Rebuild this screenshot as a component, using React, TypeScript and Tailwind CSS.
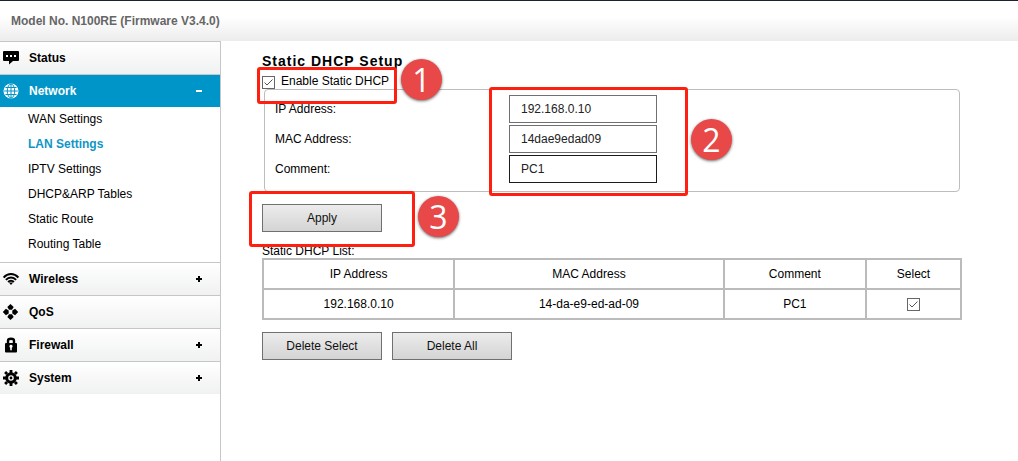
import { useState, type ReactNode } from "react";

// Router admin page: Network > LAN Settings, static DHCP section, with the
// numbered walkthrough callouts drawn over the steps.

const icons: Record<string, ReactNode> = {
  status: (
    <>
      <path d="M1 1h14a1 1 0 0 1 1 1v8a1 1 0 0 1-1 1h-5l-4 3.6V11H1a1 1 0 0 1-1-1V2a1 1 0 0 1 1-1z" />
      <path d="M3 5h2v2H3zM7 5h2v2H7zM11 5h2v2h-2z" fill="#fff" />
    </>
  ),
  network: (
    <>
      <circle cx="8" cy="8" r="7.5" />
      <g fill="none" stroke="#0095c8" strokeWidth="1">
        <path d="M8 1v14M1.2 8h13.6M2.4 4.5h11.2M2.4 11.5h11.2" />
        <ellipse cx="8" cy="8" rx="3.7" ry="7" />
      </g>
    </>
  ),
  wireless: (
    <>
      <g fill="none" stroke="currentColor" strokeWidth="2">
        <path d="M.6 6.6C4.8 1.8 11.2 1.8 15.4 6.600" />
        <path d="M2.900 8.900c2.900-3.100 7.300-3.100 10.200 0" />
        <path d="M5.100 11c1.600-1.700 4.200-1.700 5.800 0" />
      </g>
      <path d="M5.900 11.500h4.200L8 14z" />
    </>
  ),
  qos: (
    <path d="M7.500 0l3.200 3.100-1.700 2.600H6L4.300 3.100zM7.500 16l3.200-3.100-1.700-2.600H6l-1.700 2.600zM-.2 8l3.100-3.200L5.700 6.500v3L2.900 11.200zM15.200 8l-3.100-3.200-2.800 1.700v3l2.800 1.700z" />
  ),
  firewall: (
    <>
      <path d="M5 7V3.800C5 2.400 6 1.800 8 1.800s3 .6 3 2V7" fill="none" stroke="currentColor" strokeWidth="2.400" />
      <rect x="2" y="6" width="12" height="9.500" rx="1" />
      <path d="M8 7.800a1.600 1.600 0 0 1 .8 3v2.400H7.200v-2.400a1.600 1.600 0 0 1 .8-3z" fill="#fff" />
    </>
  ),
  system: (
    <>
      <g stroke="currentColor" strokeWidth="2.800">
        <path d="M8 0v3M8 13v3M0 8h3M13 8h3M2.100 2.100l2 2M11.900 11.900l2 2M13.900 2.100l-2 2M4.100 11.900l-2 2" />
      </g>
      <circle cx="8" cy="8" r="4.300" fill="none" stroke="currentColor" strokeWidth="3" />
      <circle cx="8" cy="8" r="1.400" />
    </>
  ),
};

const subPages = [
  "WAN Settings",
  "LAN Settings",
  "IPTV Settings",
  "DHCP&ARP Tables",
  "Static Route",
  "Routing Table",
];

interface NavItem {
  id: string;
  label: string;
  expandable?: boolean;
  pages?: string[];
}

const nav: NavItem[] = [
  { id: "status", label: "Status" },
  { id: "network", label: "Network", expandable: true, pages: subPages },
  { id: "wireless", label: "Wireless", expandable: true },
  { id: "qos", label: "QoS" },
  { id: "firewall", label: "Firewall", expandable: true },
  { id: "system", label: "System", expandable: true },
];

const fields = [
  { id: "ip", label: "IP Address:", value: "192.168.0.10", border: "border-[#707070]" },
  { id: "mac", label: "MAC Address:", value: "14dae9edad09", border: "border-[#707070]" },
  { id: "comment", label: "Comment:", value: "PC1", border: "border-[#1c1c1c]" },
];

const columns = [
  { label: "IP Address", width: "w-[27.4%]" },
  { label: "MAC Address", width: "w-[38.6%]" },
  { label: "Comment", width: "w-[20.4%]" },
  { label: "Select", width: "w-[13.6%]" },
];

function Sidebar() {
  return (
    <nav className="w-[221px] shrink-0 border-r border-[#c6c6c6]">
      <ul>
        {nav.map((item) => {
          const open = !!item.pages;
          return (
            <li key={item.id}>
              <button
                type="button"
                className={`flex h-[33px] w-full items-center gap-[10px] border-t border-[#c6c6c6] pr-[18px] pl-[3px] font-bold ${
                  open
                    ? "bg-[#0095c8] text-white"
                    : "bg-linear-to-b from-white to-[#f0f1f1] text-black"
                }`}
              >
                <svg viewBox="0 0 16 16" className="size-4" fill="currentColor">
                  {icons[item.id]}
                </svg>
                <span>{item.label}</span>
                {item.expandable && (
                  <svg viewBox="0 0 6 6" className="ml-auto size-[6px]" fill="currentColor">
                    <path d="M0 2h6v2H0z" />
                    {!open && <path d="M2 0h2v6H2z" />}
                  </svg>
                )}
              </button>
              {item.pages && (
                <ul className="pb-[5px] pl-7">
                  {item.pages.map((page) => (
                    <li key={page} className="leading-[25px]">
                      <a
                        href="#"
                        className={
                          page === "LAN Settings" ? "font-bold text-[#0f96c6]" : "text-black"
                        }
                      >
                        {page}
                      </a>
                    </li>
                  ))}
                </ul>
              )}
            </li>
          );
        })}
      </ul>
    </nav>
  );
}

function Checkbox({ id, label }: { id: string; label?: string }) {
  const [checked, setChecked] = useState(true);
  return (
    <span className="relative inline-block size-[13px]">
      <input
        id={id}
        type="checkbox"
        aria-label={label}
        checked={checked}
        onChange={(e) => setChecked(e.target.checked)}
        className="block size-[13px] appearance-none border border-[#666] bg-white"
      />
      {checked && (
        <svg
          viewBox="0 0 13 13"
          className="pointer-events-none absolute inset-0 size-[13px]"
          fill="none"
          stroke="#555"
        >
          <path d="M2.500 6.500 5 9l5.500-5.500" />
        </svg>
      )}
    </span>
  );
}

function Button({ children }: { children: ReactNode }) {
  return (
    <button
      type="button"
      className="h-7 w-[120px] border border-[#707070] bg-linear-to-b from-[#ececec] to-[#d4d4d4] text-[#111]"
    >
      {children}
    </button>
  );
}

// Red outline plus numbered disc, placed over the step it points at.
function Callout({ step, box, disc }: { step: number; box: string; disc: string }) {
  return (
    <>
      <span
        className={`pointer-events-none absolute z-10 rounded-[3px] border-3 border-[#ff1f10] ${box}`}
      />
      <span
        className={`pointer-events-none absolute z-10 flex size-[41px] items-center justify-center rounded-full bg-[#e84848] font-['Open_Sans',sans-serif] text-[32px] leading-none text-white shadow-[0_1px_3px_rgba(0,0,0,0.6)] ${disc}`}
      >
        {step}
      </span>
    </>
  );
}

export default function App() {
  const [values, setValues] = useState(fields.map((f) => f.value));

  return (
    <div className="flex min-h-screen flex-col bg-white font-['Liberation_Sans',Arial,sans-serif] text-xs text-black">
      <header className="flex h-[41px] items-center border-t border-[#1b2330] bg-linear-to-b from-white from-40% to-[#ececec] pl-[11px] font-bold text-[#666]">
        Model No. N100RE (Firmware V3.4.0)
      </header>

      <div className="flex flex-1">
        <Sidebar />

        <main className="min-w-0 flex-1 pt-[10px] pr-14 pl-[41px]">
          <h1 className="text-sm leading-5 font-bold tracking-[1px]">Static DHCP Setup</h1>

          <div className="relative flex h-[18px] w-fit items-end gap-[6px]">
            <Checkbox id="enable" />
            <label htmlFor="enable" className="leading-4">
              Enable Static DHCP
            </label>
            <Callout
              step={1}
              box="-top-1 -left-[5px] h-[37px] w-[140px]"
              disc="-top-3 left-[139px]"
            />
          </div>

          <div className="mx-[2px] flex rounded-[4px] border border-[#bdbdbd] pt-[5px] pb-2 pl-[10px]">
            <div className="flex w-[234px] flex-col gap-[2px]">
              {fields.map((f) => (
                <label key={f.id} htmlFor={f.id} className="leading-7">
                  {f.label}
                </label>
              ))}
            </div>
            <div className="relative flex w-[148px] flex-col gap-[2px]">
              {fields.map((f, i) => (
                <input
                  key={f.id}
                  id={f.id}
                  type="text"
                  value={values[i]}
                  onChange={(e) =>
                    setValues(values.map((v, j) => (j === i ? e.target.value : v)))
                  }
                  className={`h-7 w-full border bg-white pl-[11px] text-[#222] ${f.border}`}
                />
              ))}
              <Callout
                step={2}
                box="-top-2 -left-5 h-[109px] w-[199px]"
                disc="top-6 left-[182px]"
              />
            </div>
          </div>

          <div className="relative mt-3 w-fit">
            <Button>Apply</Button>
            <Callout
              step={3}
              box="-top-[13px] -left-[13px] h-14 w-[166px]"
              disc="-top-2 left-[156px]"
            />
          </div>

          <table className="mt-[10px] w-full table-fixed border-collapse text-center">
            <caption className="pt-[2px] text-left leading-[14px]">Static DHCP List:</caption>
            <thead>
              <tr className="h-[30px]">
                {columns.map((c) => (
                  <th
                    key={c.label}
                    scope="col"
                    className={`border-2 border-[#bbb] font-normal ${c.width}`}
                  >
                    {c.label}
                  </th>
                ))}
              </tr>
            </thead>
            <tbody>
              <tr className="h-[30px]">
                <td className="border-2 border-[#bbb]">192.168.0.10</td>
                <td className="border-2 border-[#bbb]">14-da-e9-ed-ad-09</td>
                <td className="border-2 border-[#bbb]">PC1</td>
                <td className="border-2 border-[#bbb]">
                  <div className="flex justify-center">
                    <Checkbox id="row-1" label="Select PC1" />
                  </div>
                </td>
              </tr>
            </tbody>
          </table>

          <div className="mt-3 flex gap-[10px]">
            <Button>Delete Select</Button>
            <Button>Delete All</Button>
          </div>
        </main>
      </div>
    </div>
  );
}
